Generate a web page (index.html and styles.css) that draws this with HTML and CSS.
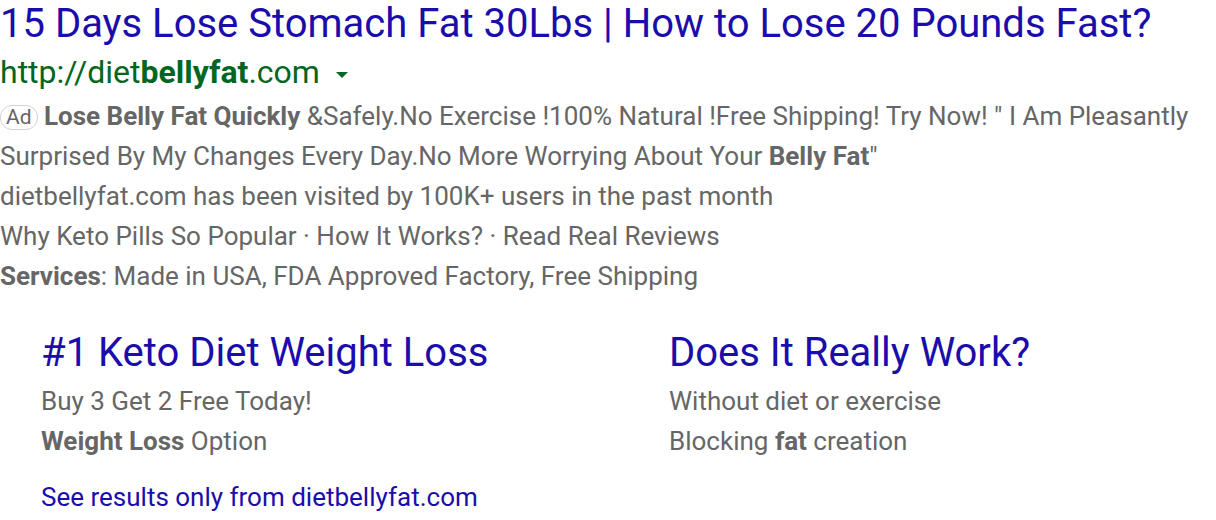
FILE: index.html
```html
<!DOCTYPE html>
<html>
<head>
<meta charset="utf-8">
<link rel="stylesheet" href="styles.css">
</head>
<body>
<div class="ad">
  <h3 class="title">15 Days Lose Stomach Fat 30Lbs | How to Lose 20 Pounds Fast?</h3>
  <div class="url">http://diet<b>bellyfat</b>.com <span class="caret"></span></div>
  <div class="desc">
    <div class="line"><span class="badge">Ad</span> <b>Lose Belly Fat Quickly</b> &amp;Safely.No Exercise !100% Natural !Free Shipping! Try Now! " I Am Pleasantly</div>
    <div class="line">Surprised By My Changes Every Day.No More Worrying About Your <b>Belly Fat</b>"</div>
    <div class="line">dietbellyfat.com has been visited by 100K+ users in the past month</div>
    <div class="line">Why Keto Pills So Popular · How It Works? · Read Real Reviews</div>
    <div class="line"><b>Services</b>: Made in USA, FDA Approved Factory, Free Shipping</div>
  </div>
  <div class="sitelinks">
    <div class="sitelink">
      <div class="sl-title">#1 Keto Diet Weight Loss</div>
      <div class="line">Buy 3 Get 2 Free Today!</div>
      <div class="line"><b>Weight Loss</b> Option</div>
    </div>
    <div class="sitelink">
      <div class="sl-title">Does It Really Work?</div>
      <div class="line">Without diet or exercise</div>
      <div class="line">Blocking <b>fat</b> creation</div>
    </div>
  </div>
  <div class="more">See results only from dietbellyfat.com</div>
</div>
</body>
</html>
```

FILE: styles.css
```css
html, body {
  margin: 0;
  padding: 0;
  background: #fff;
}
body {
  font-family: Roboto, Arial, sans-serif;
}
.title {
  margin: 0;
  font-weight: 400;
  font-size: 40px;
  line-height: 48px;
  color: #1a0dab;
  white-space: nowrap;
}
.url {
  font-size: 32px;
  line-height: 48px;
  color: #006621;
  display: flex;
  align-items: center;
  white-space: pre;
}
.url b { font-weight: 700; }
.caret {
  display: inline-block;
  width: 0;
  height: 0;
  border-left: 6px solid transparent;
  border-right: 6px solid transparent;
  border-top: 6px solid #006621;
  margin-left: 8px;
  margin-top: 6px;
}
.line {
  color: #666;
  font-size: 26px;
  line-height: 40px;
  white-space: nowrap;
}
.line b { font-weight: 700; }
.badge {
  display: inline-block;
  font-size: 21px;
  line-height: 23px;
  padding: 0 5px;
  border: 1px solid #d2d2d2;
  border-radius: 12px;
  color: #666;
  vertical-align: 1px;
}
.sitelinks {
  display: grid;
  grid-template-columns: 628px 1fr;
  padding-left: 41px;
  margin-top: 33px;
}
.sl-title {
  font-size: 40px;
  line-height: 48px;
  color: #1a0dab;
  margin-bottom: 4px;
  white-space: nowrap;
}
.more {
  padding-left: 41px;
  margin-top: 16px;
  font-size: 26px;
  line-height: 40px;
  color: #1a0dab;
}
```
